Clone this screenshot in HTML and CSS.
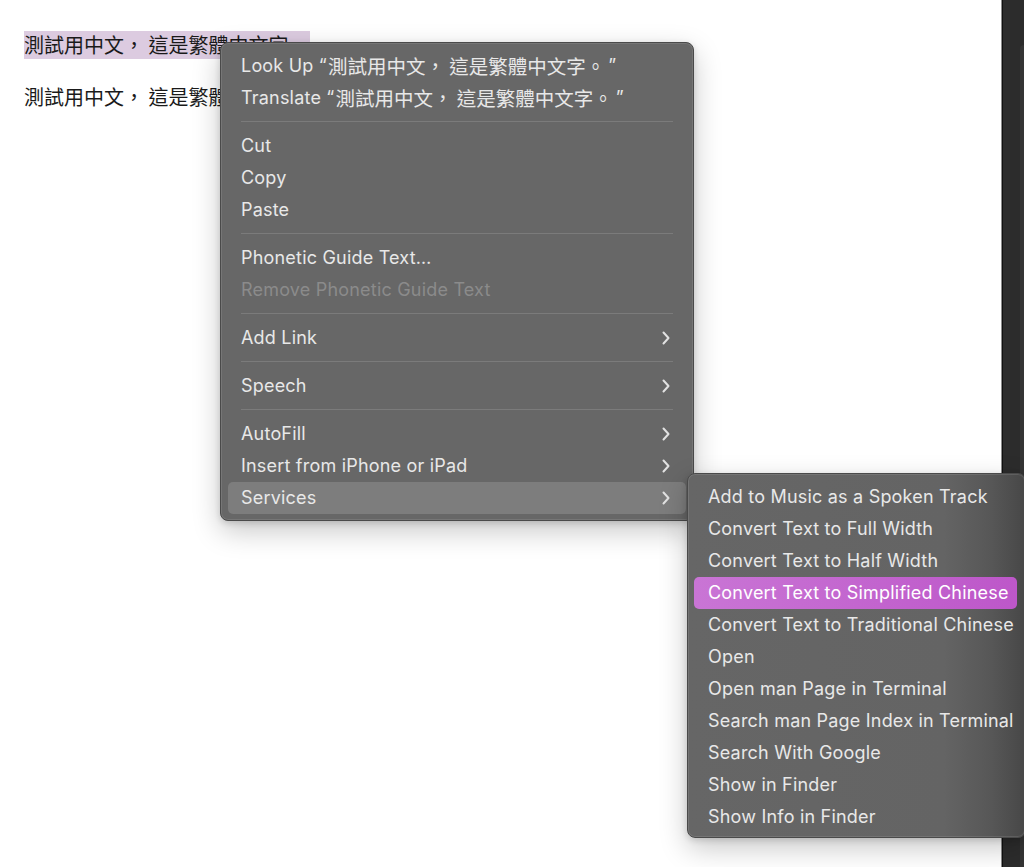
FILE: index.html
```html
<!DOCTYPE html>
<html lang="zh-Hant">
<head>
<meta charset="utf-8">
<title>Context menu</title>
<link rel="stylesheet" href="styles.css">
</head>
<body>
<div class="window">
  <main class="doc">
    <p class="line"><span class="sel">測試用中文， 這是繁體中文字。</span></p>
    <p class="line">測試用中文， 這是繁體中文字。</p>
  </main>
  <aside class="side"><div class="side-panel"></div></aside>
</div>

<div class="menu main-menu">
  <div class="item">Look Up “<span class="cjk">測試用中文， 這是繁體中文字。</span>”</div>
  <div class="item">Translate “<span class="cjk">測試用中文， 這是繁體中文字。</span>”</div>
  <div class="sep"></div>
  <div class="item">Cut</div>
  <div class="item">Copy</div>
  <div class="item">Paste</div>
  <div class="sep"></div>
  <div class="item">Phonetic Guide Text…</div>
  <div class="item disabled">Remove Phonetic Guide Text</div>
  <div class="sep"></div>
  <div class="item sub">Add Link<svg class="chev" viewBox="0 0 8 14" width="8" height="14"><path d="M1.5 1.5 L6.5 7 L1.5 12.5"/></svg></div>
  <div class="sep"></div>
  <div class="item sub">Speech<svg class="chev" viewBox="0 0 8 14" width="8" height="14"><path d="M1.5 1.5 L6.5 7 L1.5 12.5"/></svg></div>
  <div class="sep"></div>
  <div class="item sub">AutoFill<svg class="chev" viewBox="0 0 8 14" width="8" height="14"><path d="M1.5 1.5 L6.5 7 L1.5 12.5"/></svg></div>
  <div class="item sub">Insert from iPhone or iPad<svg class="chev" viewBox="0 0 8 14" width="8" height="14"><path d="M1.5 1.5 L6.5 7 L1.5 12.5"/></svg></div>
  <div class="item sub open">Services<svg class="chev" viewBox="0 0 8 14" width="8" height="14"><path d="M1.5 1.5 L6.5 7 L1.5 12.5"/></svg></div>
</div>

<div class="menu sub-menu">
  <div class="item">Add to Music as a Spoken Track</div>
  <div class="item">Convert Text to Full Width</div>
  <div class="item">Convert Text to Half Width</div>
  <div class="item active">Convert Text to Simplified Chinese</div>
  <div class="item">Convert Text to Traditional Chinese</div>
  <div class="item">Open</div>
  <div class="item">Open man Page in Terminal</div>
  <div class="item">Search man Page Index in Terminal</div>
  <div class="item">Search With Google</div>
  <div class="item">Show in Finder</div>
  <div class="item">Show Info in Finder</div>
</div>
</body>
</html>
```

FILE: styles.css
```css
html, body {
  margin: 0;
  padding: 0;
  height: 100%;
  background: #ffffff;
}

body {
  font-family: "Inter", "Noto Sans CJK TC", sans-serif;
  overflow: hidden;
}

.window {
  display: flex;
  height: 100%;
}

.doc {
  flex: 1;
  padding: 31px 0 0 24px;
}

.line {
  margin: 0 0 24px 0;
  font-family: "Noto Sans CJK TC", sans-serif;
  font-size: 20px;
  line-height: 28px;
  color: #1a1a1a;
  white-space: nowrap;
}

.sel {
  background: #dccbe0;
  padding-right: 2px;
  display: inline-block;
}

.side {
  width: 23px;
  box-sizing: border-box;
  background: #2c2c2c;
  border-left: 1px solid #8c8c8c;
  box-shadow: inset 1px 0 0 #111;
  padding: 45px 0 0 18px;
}

.side-panel {
  height: 100%;
  background: #353535;
  border-radius: 5px 0 0 0;
}

.menu {
  position: absolute;
  box-sizing: border-box;
  background: #676767;
  border: 1px solid #4a4a4a;
  border-radius: 8px;
  box-shadow: inset 0 0 0 1px rgba(255, 255, 255, 0.1), 0 10px 28px rgba(0, 0, 0, 0.22), 0 2px 6px rgba(0, 0, 0, 0.15);
  color: #e8e8e8;
  font-family: "Inter", "Noto Sans CJK TC", sans-serif;
  font-size: 18px;
  letter-spacing: 0.2px;
}

.main-menu {
  left: 220px;
  top: 42px;
  width: 474px;
  padding: 7px 7px 6px 7px;
}

.sub-menu {
  left: 687px;
  top: 473px;
  width: 339px;
  padding: 7px 8px 4px 6px;
  background: linear-gradient(to right, #666666 0%, #646464 76%, #575757 90%, #474747 100%);
}

.item {
  height: 32px;
  line-height: 32px;
  padding: 0 16px 0 13px;
  border-radius: 5px;
  display: flex;
  align-items: center;
  white-space: nowrap;
}

.sub-menu .item {
  padding-left: 14px;
}

.item .cjk {
  font-family: "Noto Sans CJK TC", sans-serif;
  font-size: 19.5px;
  letter-spacing: 0;
  margin-left: 1px;
  margin-right: 3px;
}

.item.disabled {
  color: #8b8b8b;
}

.item.sub {
  justify-content: space-between;
}

.item.open {
  background: #7d7d7d;
}

.item.active {
  background: linear-gradient(to right, #c975d5, #bd57c9);
  color: #ffffff;
}

.chev {
  fill: none;
  stroke: #e2e2e2;
  stroke-width: 2;
  stroke-linecap: round;
  stroke-linejoin: round;
}

.sep {
  height: 1px;
  margin: 7px 13px 8px 13px;
  background: #7b7b7b;
}
```
